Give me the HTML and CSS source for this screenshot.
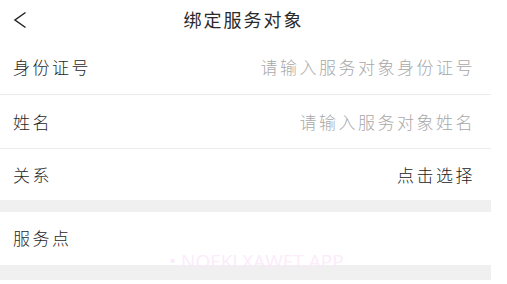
FILE: index.html
```html
<!DOCTYPE html>
<html lang="zh-CN">
<head>
<meta charset="utf-8">
<link rel="stylesheet" href="styles.css">
</head>
<body>
<div class="page">
  <header class="nav">
    <span class="back">
      <svg width="14" height="18" viewBox="0 0 14 18"><polyline points="12.5,1.5 2,9 12.5,16.5" fill="none" stroke="#222" stroke-width="1.5" stroke-linejoin="miter"/></svg>
    </span>
    <h1 class="title">绑定服务对象</h1>
  </header>
  <div class="group">
    <div class="row row-first"><span class="label">身份证号</span><span class="value hint">请输入服务对象身份证号</span></div>
    <div class="row row-second"><span class="label">姓名</span><span class="value hint">请输入服务对象姓名</span></div>
    <div class="row row-third"><span class="label">关系</span><span class="value">点击选择</span></div>
  </div>
  <div class="gap gap-a"></div>
  <div class="group">
    <div class="row row-fourth"><span class="label">服务点</span></div>
  </div>
  <div class="gap gap-b"></div>
  <div class="watermark">• NOEKLXAWET.APP</div>
</div>
</body>
</html>
```
FILE: styles.css
```css
* { box-sizing: border-box; margin: 0; padding: 0; }
html, body { background: #fff; }
body {
  font-family: "Noto Sans CJK SC", "Noto Sans", sans-serif;
  color: #333;
}
.page {
  position: relative;
  width: 491px;
  height: 284px;
  overflow: hidden;
}
.nav {
  height: 40px;
  display: flex;
  align-items: center;
  position: relative;
}
.back {
  display: flex;
  padding-left: 13px;
  width: 40px;
}
.title {
  position: absolute;
  left: 0;
  right: 4px;
  top: 0;
  height: 40px;
  line-height: 38px;
  text-align: center;
  font-size: 18px;
  font-weight: 400;
  letter-spacing: 2px;
  color: #2a2a2a;
  pointer-events: none;
}
.row {
  display: flex;
  align-items: center;
  justify-content: space-between;
  padding: 0 16px 0 13px;
  font-size: 17px;
  font-weight: 300;
  letter-spacing: 2.5px;
}
.row-first { height: 55px; border-bottom: 1px solid #ececec; padding-bottom: 2px; }
.row-second { height: 54px; border-bottom: 1px solid #ececec; }
.row-third { height: 51px; }
.row-fourth { height: 53px; padding-bottom: 2px; }
.label { color: #1f1f1f; }
.value { color: #222; }
.hint { color: #a8a8a8; }
.gap { background: #f0f0f0; }
.gap-a { height: 12px; }
.gap-b { height: 15px; }
.watermark {
  position: absolute;
  left: 169px;
  top: 248px;
  font-family: "Open Sans", sans-serif;
  font-size: 19px;
  color: #fbe8fb;
  opacity: 0.85;
  white-space: nowrap;
}
```
